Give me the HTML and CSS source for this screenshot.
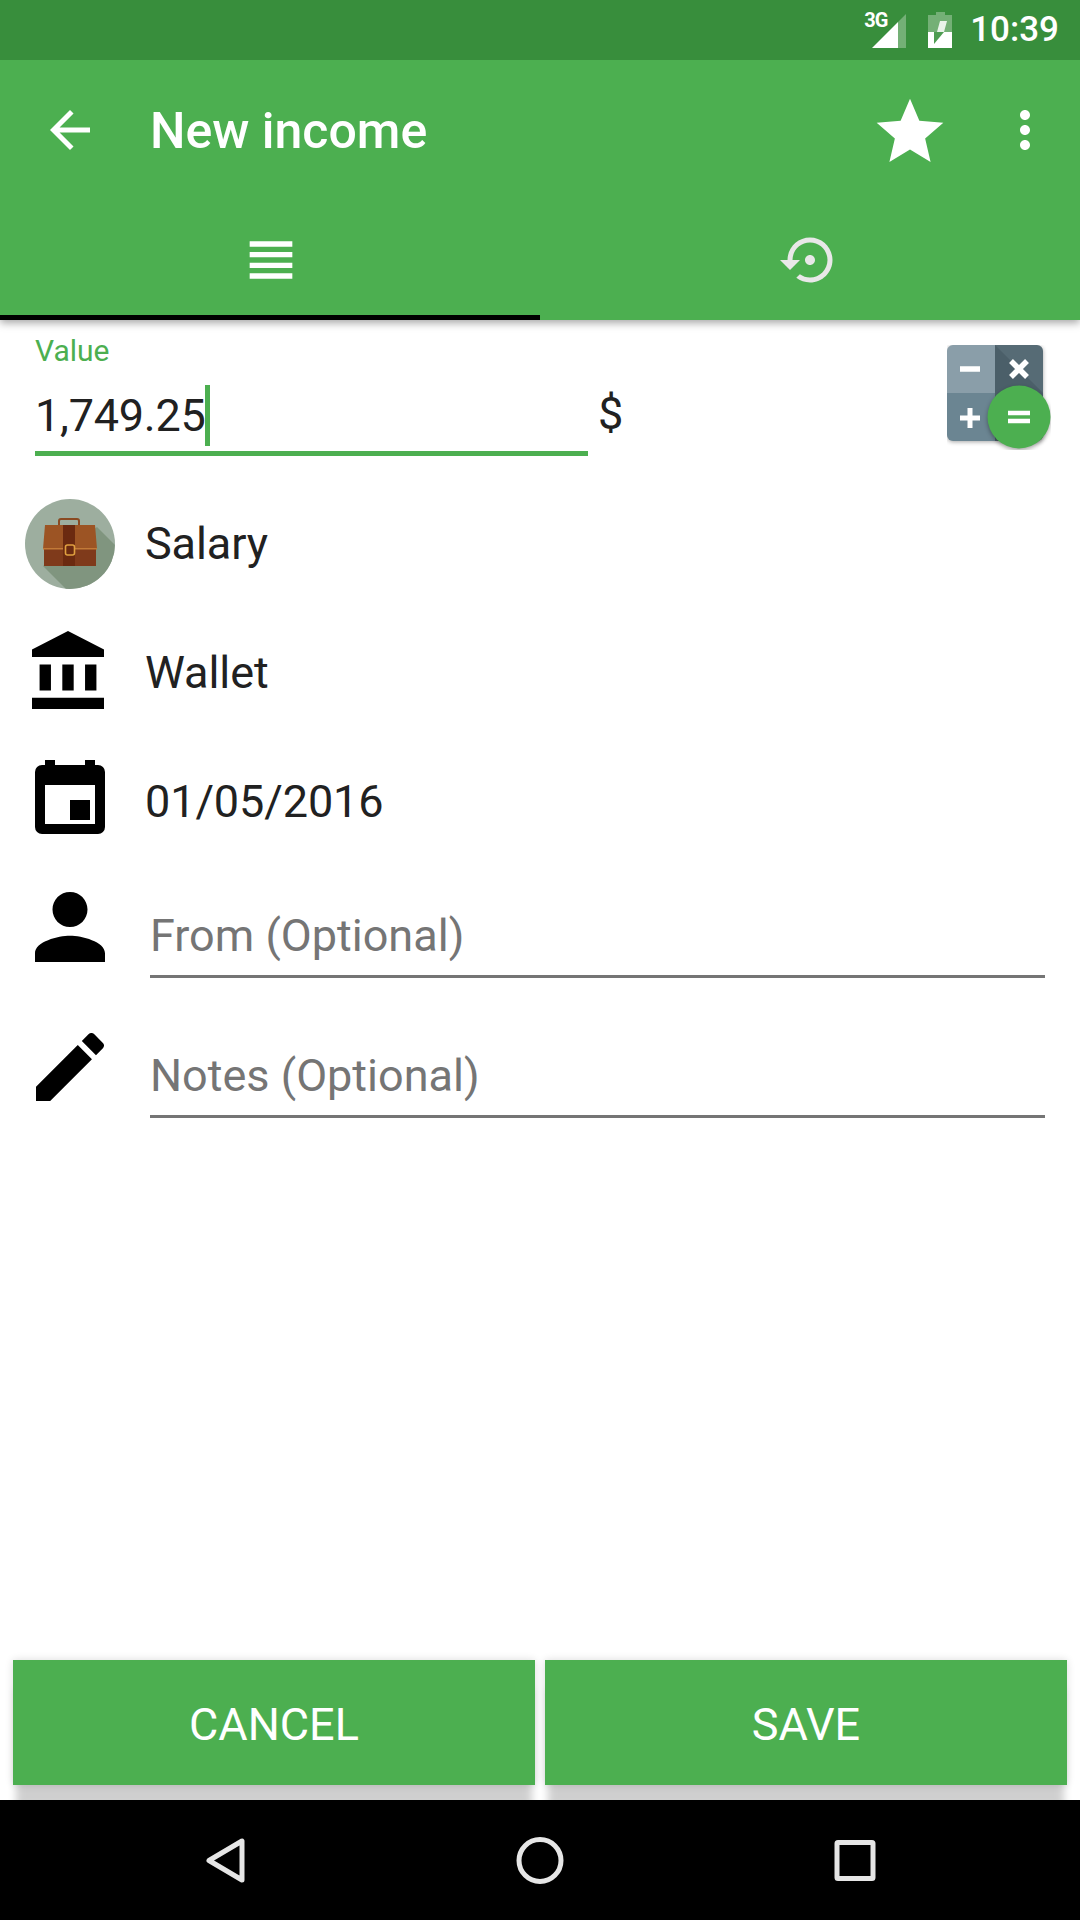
FILE: index.html
```html
<!DOCTYPE html>
<html lang="en">
<head>
  <meta charset="UTF-8">
  <meta name="viewport" content="width=device-width, initial-scale=1.0">
  <title>New income</title>
  <link rel="stylesheet" href="styles.css">
</head>
<body>
  <header class="app-header">
    <div class="status-bar">
      <div class="signal">
        <span class="signal-type">3G</span>
        <svg width="34" height="35" viewBox="0 0 34 35">
          <polygon points="26,9 34,1 34,35 26,35" fill="#fff" opacity="0.3"/>
          <polygon points="0,35 26,9 26,35" fill="#fff"/>
        </svg>
      </div>
      <svg class="battery" width="24" height="36" viewBox="0 0 24 36">
        <path d="M8 0h9v3h7v33H0V3h8z" fill="#fff" opacity="0.3"/>
        <rect y="20" width="24" height="16" fill="#fff"/>
        <polygon points="12,9 19,9 16,20 9,20" fill="#fff" opacity="0.85"/>
        <polygon points="6,20 16,20 6,32" fill="#4e9c52"/>
      </svg>
      <span class="clock">10:39</span>
    </div>

    <div class="toolbar">
      <svg class="back" width="60" height="60" viewBox="0 0 24 24" fill="#fff">
        <path d="M20 11H7.83l5.59-5.59L12 4l-8 8 8 8 1.41-1.41L7.83 13H20v-2z"/>
      </svg>
      <h1 class="toolbar-title">New income</h1>
      <svg class="star" width="80" height="80" viewBox="0 0 24 24" fill="#fff">
        <path d="M12 17.27L18.18 21l-1.64-7.03L22 9.24l-7.19-.61L12 2 9.19 8.63 2 9.24l5.46 4.73L5.82 21z"/>
      </svg>
      <svg class="more" width="60" height="60" viewBox="0 0 24 24" fill="#fff">
        <path d="M12 8c1.1 0 2-.9 2-2s-.9-2-2-2-2 .9-2 2 .9 2 2 2zm0 2c-1.1 0-2 .9-2 2s.9 2 2 2 2-.9 2-2-.9-2-2-2zm0 6c-1.1 0-2 .9-2 2s.9 2 2 2 2-.9 2-2-.9-2-2-2z"/>
      </svg>
    </div>

    <div class="tabs">
      <div class="tab tab-active">
        <svg class="tab-list" width="64" height="64" viewBox="0 0 24 24" fill="#fff">
          <path d="M4 15h16v-2H4v2zm0 4h16v-2H4v2zm0-8h16V9H4v2zm0-6v2h16V5H4z"/>
        </svg>
      </div>
      <div class="tab">
        <svg width="60" height="60" viewBox="0 0 24 24" fill="#e8e8e8">
          <path d="M14 12c0-1.1-.9-2-2-2s-2 .9-2 2 .9 2 2 2 2-.9 2-2zm-2-9c-4.97 0-9 4.03-9 9H0l4 4 4-4H5c0-3.87 3.13-7 7-7s7 3.13 7 7-3.13 7-7 7c-1.51 0-2.91-.49-4.06-1.3l-1.42 1.44C8.04 20.3 9.94 21 12 21c4.97 0 9-4.03 9-9s-4.03-9-9-9z"/>
        </svg>
      </div>
    </div>
  </header>

  <main class="form">
    <div class="value-row">
      <div class="value-field">
        <label class="value-label">Value</label>
        <div class="value-input">
          <span class="value-text">1,749.25</span>
          <span class="caret"></span>
        </div>
      </div>
      <span class="currency">$</span>
      <svg class="calc" width="104" height="105" viewBox="0 0 104 105">
        <defs>
          <clipPath id="calc-clip"><rect width="96" height="96" rx="6"/></clipPath>
        </defs>
        <g class="calc-body">
          <g clip-path="url(#calc-clip)">
            <rect width="48" height="48" fill="#8a9ea9"/>
            <rect x="48" width="48" height="48" fill="#566b75"/>
            <polygon points="48,0 96,48 96,96 48,48" fill="#4b5f69"/>
            <rect y="48" width="48" height="48" fill="#6b8592"/>
            <rect x="48" y="48" width="48" height="48" fill="#4b5f69"/>
          </g>
        </g>
        <g stroke="#fff" fill="none">
          <path d="M13 24h20" stroke-width="5.5"/>
          <path d="M64 16l16 16M80 16L64 32" stroke-width="5.5"/>
          <path d="M13 73h20M23 63v20" stroke-width="5"/>
        </g>
        <circle class="calc-fab" cx="72" cy="72" r="31.5" fill="#4caf50"/>
        <path d="M61 68h22M61 76h22" stroke="#fff" stroke-width="4.5"/>
      </svg>
    </div>

    <div class="picker-row">
      <div class="row-icon">
        <svg width="90" height="90" viewBox="0 0 90 90">
          <defs>
            <clipPath id="salary-clip"><circle cx="45" cy="45" r="45"/></clipPath>
          </defs>
          <circle cx="45" cy="45" r="45" fill="#9dae9f"/>
          <polygon points="72,28 110,66 70,110 43,92 18,67" fill="#80957f" clip-path="url(#salary-clip)"/>
          <rect x="34" y="20" width="20" height="10" rx="2" fill="none" stroke="#8a4a22" stroke-width="2"/>
          <path d="M20 26h50l2 24H18z" fill="#9c5424"/>
          <rect x="19" y="50" width="52" height="17" fill="#7f3a1b"/>
          <rect x="18" y="49" width="54" height="1.5" fill="#c27a38"/>
          <rect x="38" y="26" width="12" height="41" fill="#6b2a10"/>
          <rect x="40.5" y="46" width="9" height="10" rx="2" fill="none" stroke="#e0a040" stroke-width="1.6"/>
        </svg>
      </div>
      <span class="row-text">Salary</span>
    </div>

    <div class="picker-row">
      <div class="row-icon icon-bank">
        <svg width="72" height="78" viewBox="2 1 19 21" preserveAspectRatio="none">
          <path d="M4 10v7h3v-7H4zm6 0v7h3v-7h-3zM2 22h19v-3H2v3zm14-12v7h3v-7h-3zm-4.5-9L2 6v2h19V6l-9.5-5z"/>
        </svg>
      </div>
      <span class="row-text">Wallet</span>
    </div>

    <div class="picker-row">
      <div class="row-icon icon-date">
        <svg width="70" height="74" viewBox="0 0 70 74">
          <path fill-rule="evenodd" d="M10 0h10v5h30V0h10v5h3a7 7 0 0 1 7 7v55a7 7 0 0 1-7 7H7a7 7 0 0 1-7-7V12a7 7 0 0 1 7-7h3zM10 25v39h50V25z"/>
          <rect x="35" y="40" width="20" height="20"/>
        </svg>
      </div>
      <span class="row-text">01/05/2016</span>
    </div>

    <div class="input-row">
      <div class="row-icon">
        <svg width="70" height="70" viewBox="4 4 16 16">
          <path d="M12 12c2.21 0 4-1.79 4-4s-1.79-4-4-4-4 1.79-4 4 1.79 4 4 4zm0 2c-2.67 0-8 1.34-8 4v2h16v-2c0-2.66-5.33-4-8-4z"/>
        </svg>
      </div>
      <div class="input-line">From (Optional)</div>
    </div>

    <div class="input-row">
      <div class="row-icon icon-pencil">
        <svg width="68" height="68" viewBox="3 3 18 18">
          <path d="M3 17.25V21h3.75L17.81 9.94l-3.75-3.75L3 17.25zM20.71 7.04c.39-.39.39-1.02 0-1.41l-2.34-2.34c-.39-.39-1.02-.39-1.41 0l-1.83 1.83 3.75 3.75 1.83-1.83z"/>
        </svg>
      </div>
      <div class="input-line">Notes (Optional)</div>
    </div>
  </main>

  <div class="actions">
    <button class="action-btn">CANCEL</button>
    <button class="action-btn">SAVE</button>
  </div>

  <nav class="nav-bar">
    <svg width="60" height="60" viewBox="0 0 60 60">
      <path d="M14 30.5L47 11v39z"/>
    </svg>
    <svg width="60" height="60" viewBox="0 0 60 60">
      <circle cx="30" cy="30.5" r="21"/>
    </svg>
    <svg width="60" height="60" viewBox="0 0 60 60">
      <rect x="12" y="12.5" width="36" height="36" rx="1"/>
    </svg>
  </nav>
</body>
</html>
```

FILE: styles.css
```css
* {
  box-sizing: border-box;
}

body {
  margin: 0;
  width: 1080px;
  height: 1920px;
  overflow: hidden;
  display: flex;
  flex-direction: column;
  background-color: #fff;
  color: #212121;
  font-family: 'Roboto', 'Liberation Sans', sans-serif;
}

svg {
  display: block;
  flex-shrink: 0;
}

.app-header {
  position: relative;
  z-index: 1;
  background-color: #4caf50;
  box-shadow: 0 3px 8px rgba(0, 0, 0, 0.35);
}

.status-bar {
  height: 60px;
  display: flex;
  align-items: center;
  justify-content: flex-end;
  padding-right: 21px;
  background-color: #388e3c;
  color: #fff;
}

.signal {
  position: relative;
  margin-top: 1px;
}

.signal-type {
  position: absolute;
  left: -8px;
  top: -4px;
  font-size: 20px;
  line-height: 22px;
  font-weight: 700;
  letter-spacing: -1px;
}

.battery {
  margin-left: 22px;
}

.clock {
  margin-left: 18px;
  font-size: 35px;
  font-weight: 500;
  line-height: 60px;
}

.toolbar {
  height: 140px;
  display: flex;
  align-items: center;
  padding-left: 40px;
  padding-right: 25px;
}

.toolbar-title {
  flex: 1;
  margin: 2px 0 0 50px;
  font-size: 50px;
  font-weight: 500;
  color: #fff;
}

.star {
  margin-top: 3px;
}

.more {
  margin-left: 45px;
}

.tabs {
  height: 120px;
  display: flex;
}

.tab {
  flex: 1;
  display: flex;
  align-items: center;
  justify-content: center;
}

.tab-active {
  border-bottom: 5px solid #000;
  padding-top: 5px;
}

.tab-list {
  margin-left: 1px;
}

.form {
  flex: 1;
}

.value-row {
  display: flex;
  align-items: flex-start;
  height: 159px;
  padding: 13px 29px 0 35px;
}

.value-field {
  width: 553px;
  border-bottom: 5px solid #4caf50;
  padding-bottom: 5px;
}

.value-label {
  display: block;
  height: 47px;
  font-size: 30px;
  line-height: 35px;
  color: #4caf50;
}

.value-input {
  display: flex;
  align-items: flex-end;
}

.value-text {
  padding-top: 5px;
  font-size: 45px;
  line-height: 61px;
  letter-spacing: -0.25px;
}

.caret {
  width: 5px;
  height: 61px;
  background-color: #4caf50;
}

.currency {
  margin: 50px 0 0 10px;
  font-size: 45px;
  line-height: 61px;
}

.calc {
  margin-left: auto;
  margin-top: 12px;
}

.calc-body {
  filter: drop-shadow(0 1px 2px rgba(0, 0, 0, 0.35));
}

.calc-fab {
  filter: drop-shadow(0 2px 2px rgba(0, 0, 0, 0.35));
}

.picker-row {
  height: 129px;
  display: flex;
  align-items: center;
  padding-left: 25px;
}

.row-icon {
  width: 90px;
  display: flex;
  justify-content: center;
  flex-shrink: 0;
}

.icon-bank {
  padding-right: 4px;
  margin-bottom: 6px;
}

.icon-date {
  margin-bottom: 10px;
}

.icon-pencil {
  margin-top: 1px;
}

.row-text {
  margin-left: 30px;
  font-size: 45px;
  line-height: 52px;
  letter-spacing: -0.1px;
}

.input-row {
  height: 140px;
  display: flex;
  align-items: flex-start;
  padding: 26px 35px 0 25px;
}

.input-line {
  flex: 1;
  margin: 18px 0 0 35px;
  padding-bottom: 13px;
  border-bottom: 3px solid #757575;
  font-size: 45px;
  line-height: 52px;
  color: #757575;
}

.actions {
  display: flex;
  gap: 10px;
  padding: 0 13px 15px;
}

.action-btn {
  flex: 1;
  height: 125px;
  border: 0;
  padding: 4px 0 0;
  background-color: #4caf50;
  box-shadow: 0 26px 8px -3px rgba(0, 0, 0, 0.19), 0 0 8px rgba(0, 0, 0, 0.14);
  font-family: inherit;
  font-size: 45px;
  color: #fff;
}

.nav-bar {
  height: 120px;
  display: flex;
  align-items: center;
  justify-content: center;
  gap: 255px;
  background-color: #000;
}

.nav-bar svg {
  fill: none;
  stroke: #e6e6e6;
  stroke-width: 5;
  stroke-linejoin: round;
}
```
